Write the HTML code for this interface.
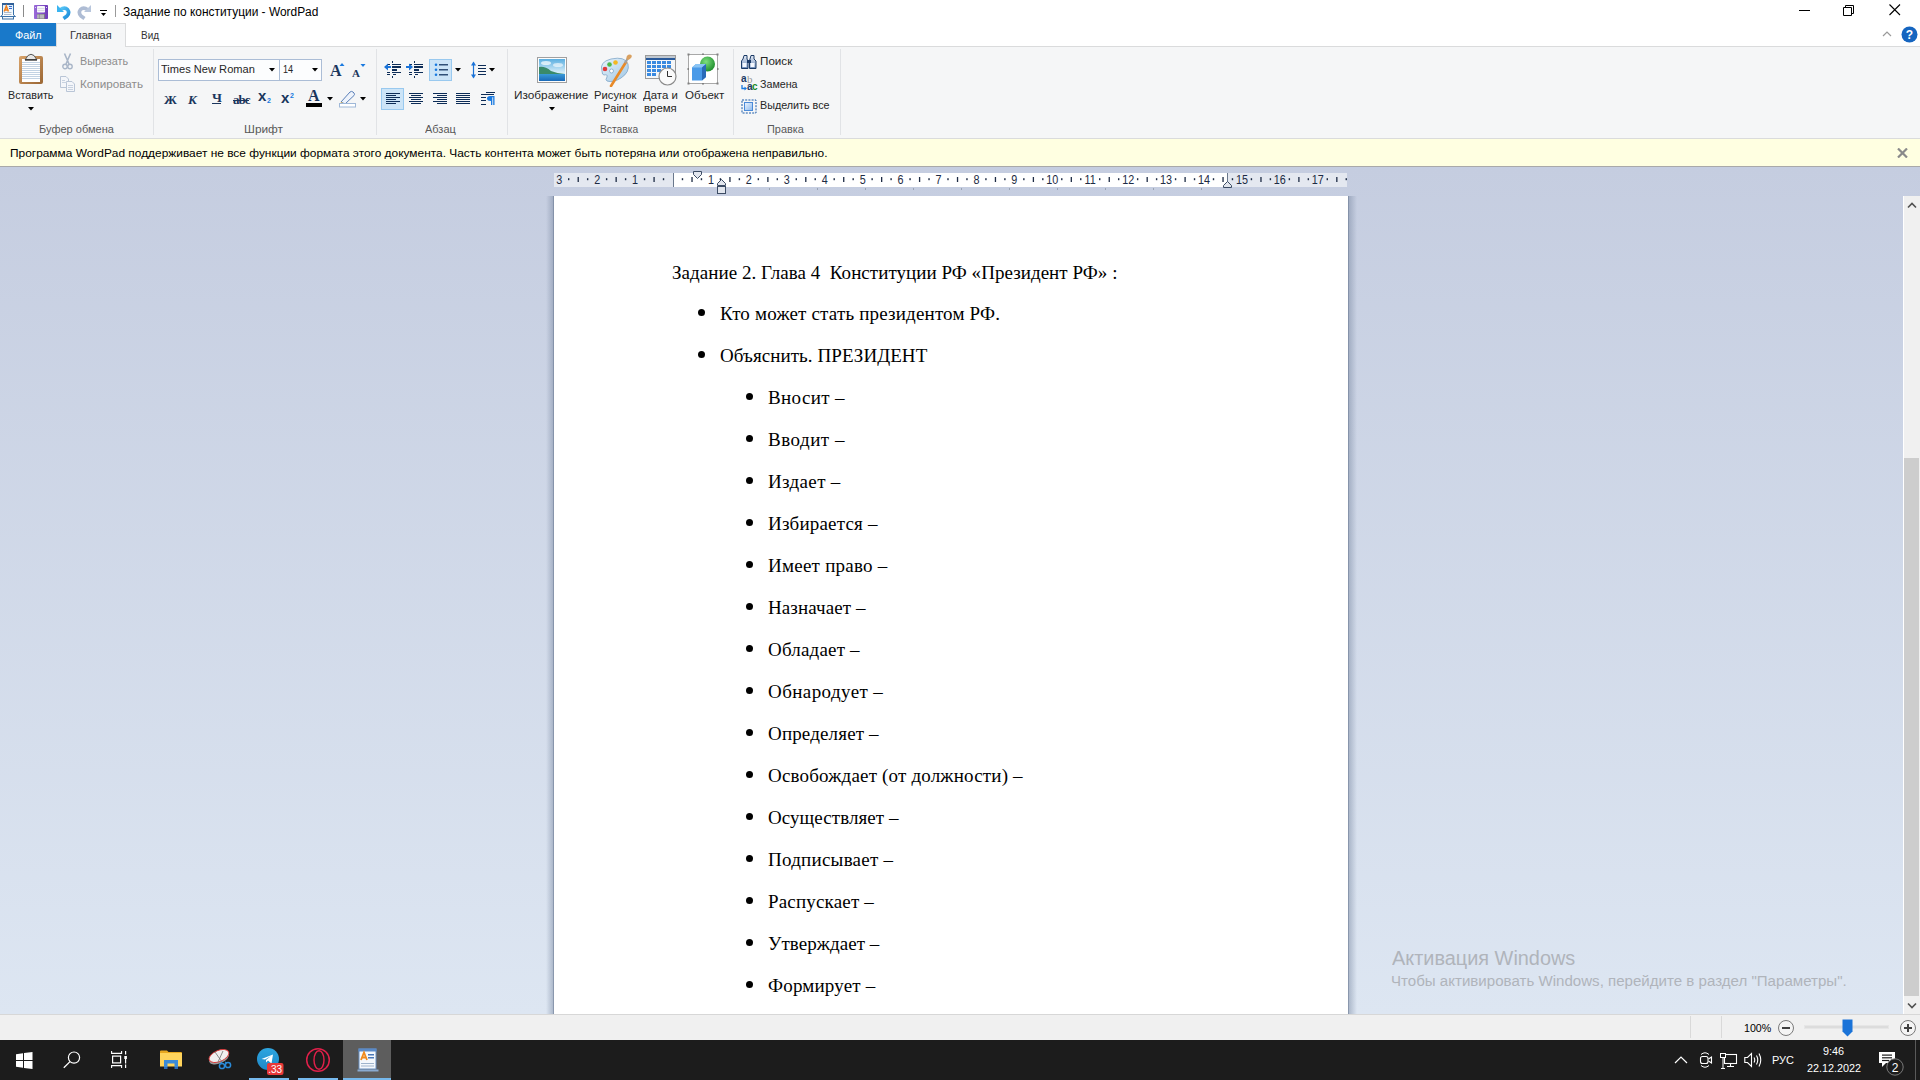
<!DOCTYPE html>
<html><head><meta charset="utf-8">
<style>
*{margin:0;padding:0;box-sizing:border-box}
html,body{width:1920px;height:1080px;overflow:hidden;background:#fff;font-family:"Liberation Sans",sans-serif;font-size:12px;color:#000}
.a{position:absolute}
.ui{font-family:"Liberation Sans",sans-serif;font-size:12px;white-space:nowrap;line-height:14px}
#title{left:0;top:0;width:1920px;height:23px;background:#fff}
#tabs{left:0;top:23px;width:1920px;height:23px;background:#fff}
#ribbon{left:0;top:46px;width:1920px;height:93px;background:#f5f6f7;border-top:1px solid #dadbdc;border-bottom:1px solid #dadbdc}
#notif{left:0;top:139px;width:1920px;height:28px;background:#ffffe1;border-bottom:1px solid #a9a9a9}
#docarea{left:0;top:167px;width:1920px;height:847px;background:linear-gradient(#c5cde0,#dde6f2)}
#page{left:554px;top:196px;width:794px;height:818px;background:#fff}
#vscroll{left:1903px;top:196px;width:17px;height:818px;background:#f0f0f0}
#status{left:0;top:1014px;width:1920px;height:26px;background:#f0f0f0;border-top:1px solid #d7d7d7}
#taskbar{left:0;top:1040px;width:1920px;height:40px;background:#1c1c1c}
.doc{font-family:"Liberation Serif",serif;font-size:19px;line-height:20px;white-space:pre;color:#000}
.lb{font-family:"Liberation Sans",sans-serif;white-space:pre;transform-origin:0 0}
.sep{top:49px;width:1px;height:86px;background:#e1e3e6}
.sf{font-family:"Liberation Serif",serif;font-weight:bold;color:#1b365d;white-space:pre}
.bul{width:7px;height:7px;border-radius:50%;background:#000}
</style></head><body>
<div id="title" class="a"></div>
<div id="tabs" class="a"></div>
<div id="ribbon" class="a"></div>
<div id="notif" class="a"></div>
<div id="docarea" class="a"></div>
<div id="page" class="a"></div>
<div id="vscroll" class="a"></div>
<div id="status" class="a"></div>
<div id="taskbar" class="a"></div>
<!--TITLE-->
<svg class="a" style="left:0;top:2px" width="17" height="19" viewBox="0 0 17 19">
 <defs><linearGradient id="wpp" x1="0" y1="0" x2="0" y2="1"><stop offset="0" stop-color="#d8ecfb"/><stop offset="1" stop-color="#ffffff"/></linearGradient></defs>
 <path d="M2.5 1.5 H13.5 V13 L15.5 14.5 H0.5 L2.5 13 Z" fill="url(#wpp)" stroke="#3a70a8" stroke-width="1"/>
 <rect x="2" y="1" width="12" height="2" fill="#2f5f98"/>
 <path d="M4.2 9.5 L6.3 4 L8.4 9.5 M5 8 H7.6" fill="none" stroke="#f07f1a" stroke-width="1.5"/>
 <rect x="9" y="4" width="3" height="1" fill="#3a6ad0"/><rect x="9" y="6" width="3" height="1" fill="#3a6ad0"/>
 <rect x="4" y="10" width="7.5" height="0.8" fill="#9aaac0"/><rect x="4" y="12" width="7.5" height="0.8" fill="#9aaac0"/>
 <rect x="2.5" y="14.5" width="11" height="2.5" fill="#f4f8fc" stroke="#3a70a8" stroke-width="1"/>
</svg>
<div class="a" style="left:23px;top:5px;width:1px;height:12px;background:#8a8a8a"></div>
<svg class="a" style="left:34px;top:5px" width="14" height="14" viewBox="0 0 14 14">
 <defs><linearGradient id="svp" x1="0" y1="0" x2="1" y2="0"><stop offset="0" stop-color="#9a6ad8"/><stop offset="1" stop-color="#6e3ab8"/></linearGradient></defs>
 <rect x="0" y="0" width="14" height="14" rx="0.8" fill="url(#svp)"/>
 <rect x="3" y="1" width="8" height="6.5" rx="0.8" fill="#f6f6fa"/>
 <rect x="3.5" y="3" width="7" height="0.6" fill="#c8ccd8"/><rect x="3.5" y="5" width="7" height="0.6" fill="#c8ccd8"/>
 <rect x="3" y="9" width="8" height="5" fill="#7a7a80"/><rect x="5.5" y="9.5" width="4.5" height="4" fill="#b8b8bc"/><rect x="3.5" y="9.5" width="1" height="4" fill="#e8e8ec"/>
 <rect x="1" y="2" width="1" height="1" fill="#e0d8f0"/><rect x="12" y="2" width="1" height="1" fill="#e0d8f0"/>
</svg>
<svg class="a" style="left:56px;top:4px" width="16" height="16" viewBox="0 0 16 16">
 <defs><linearGradient id="ug" x1="0" y1="0" x2="1" y2="1"><stop offset="0" stop-color="#5ac8f8"/><stop offset="1" stop-color="#1a8ad8"/></linearGradient></defs>
 <path d="M4 6 Q8.5 2.5 11.5 5.5 Q14 9 11 12 L7.5 14.5" fill="none" stroke="url(#ug)" stroke-width="3.6" stroke-linejoin="round"/>
 <path d="M1 1 L1 8 L8 8 Z" fill="#3ab4f0"/>
</svg>
<svg class="a" style="left:77px;top:4px" width="16" height="16" viewBox="0 0 16 16">
 <g transform="translate(15 0) scale(-1 1)">
 <path d="M4 6 Q8.5 2.5 11.5 5.5 Q14 9 11 12 L7.5 14.5" fill="none" stroke="#aebcd4" stroke-width="3.6" stroke-linejoin="round"/>
 <path d="M1 1 L1 8 L8 8 Z" fill="#b8c6dc"/>
 </g>
</svg>
<div class="a" style="left:100px;top:10px;width:7px;height:1px;background:#000"></div>
<svg class="a" style="left:100px;top:13px" width="7" height="4" viewBox="0 0 7 4"><path d="M1 0 H6 L3.5 3 Z" fill="#000"/></svg>
<div class="a" style="left:115px;top:5px;width:1px;height:12px;background:#9a9a9a"></div>
<!-- window controls -->
<div class="a" style="left:1799px;top:10px;width:11px;height:1px;background:#000"></div>
<svg class="a" style="left:1843px;top:4px" width="12" height="12" viewBox="0 0 12 12"><path d="M0.5 3.5 H8.5 V11.5 H0.5 Z M2.5 3.5 V1.5 H10.5 V9.5 H8.5" fill="none" stroke="#000"/></svg>
<svg class="a" style="left:1889px;top:4px" width="12" height="12" viewBox="0 0 12 12"><path d="M0.5 0.5 L11 11 M11 0.5 L0.5 11" stroke="#000" stroke-width="1.1"/></svg>
<!-- tabs -->
<div class="a" style="left:0;top:23px;width:56px;height:23px;background:#1979ca"></div>
<div class="a" style="left:56px;top:23px;width:70px;height:24px;background:#f5f6f7;border:1px solid #dadbdc;border-bottom:none"></div>
<svg class="a" style="left:1882px;top:30px" width="10" height="8" viewBox="0 0 10 8"><path d="M1 6 L5 2 L9 6" fill="none" stroke="#9a9a9a" stroke-width="1.2"/></svg>
<svg class="a" style="left:1901px;top:26px" width="17" height="17" viewBox="0 0 17 17"><circle cx="8.5" cy="8.5" r="8" fill="#1565c0"/><text x="8.5" y="13" font-family="Liberation Sans" font-weight="bold" font-size="12" fill="#fff" text-anchor="middle">?</text></svg>
<!--/TITLE-->
<!--RIB1-->
<div class="a sep" style="left:153px"></div>
<div class="a sep" style="left:376px"></div>
<div class="a sep" style="left:507px"></div>
<div class="a sep" style="left:733px"></div>
<div class="a sep" style="left:840px"></div>
<!-- paste -->
<svg class="a" style="left:18px;top:53px" width="27" height="33" viewBox="0 0 27 33">
 <defs><linearGradient id="brd" x1="0" y1="0" x2="1" y2="1"><stop offset="0" stop-color="#d9a36a"/><stop offset="1" stop-color="#9a6634"/></linearGradient></defs>
 <rect x="1" y="3" width="24" height="28" rx="2" fill="url(#brd)"/>
 <rect x="4" y="6" width="18" height="23" fill="#fff"/>
 <g fill="#c3d3e3"><rect x="4" y="9" width="18" height="1"/><rect x="4" y="11" width="18" height="1"/><rect x="4" y="13" width="18" height="1"/><rect x="4" y="15" width="18" height="1"/><rect x="4" y="17" width="18" height="1"/><rect x="4" y="19" width="18" height="1"/><rect x="4" y="21" width="18" height="1"/><rect x="4" y="23" width="18" height="1"/><rect x="4" y="25" width="18" height="1"/></g>
 <path d="M7 7 L10 2.5 Q13 0 16 2.5 L19 7 Z" fill="#e8e8e8" stroke="#5a5a5a" stroke-width="1"/>
 <rect x="7" y="6" width="12" height="1.5" fill="#404040"/>
</svg>
<svg class="a" style="left:28px;top:107px" width="6" height="4" viewBox="0 0 6 4"><path d="M0 0 H6 L3 3.5 Z" fill="#000"/></svg>
<!-- cut (disabled) -->
<svg class="a" style="left:62px;top:53px" width="11" height="17" viewBox="0 0 11 17">
 <path d="M2.5 0.5 L7 11 M8.5 0.5 L4 11" stroke="#a9b6c8" stroke-width="1.6" fill="none"/>
 <circle cx="3" cy="13.5" r="2.2" fill="none" stroke="#a9b6c8" stroke-width="1.4"/>
 <circle cx="8" cy="13.5" r="2.2" fill="none" stroke="#a9b6c8" stroke-width="1.4"/>
</svg>
<!-- copy (disabled) -->
<svg class="a" style="left:60px;top:76px" width="16" height="17" viewBox="0 0 16 17">
 <path d="M0.5 0.5 H6 L8.5 3 V11.5 H0.5 Z" fill="#f4f6fa" stroke="#b9c5d6"/>
 <path d="M6.5 5.5 H12 L14.5 8 V15.5 H6.5 Z" fill="#f4f6fa" stroke="#b9c5d6"/>
 <g fill="#c8d2e0"><rect x="8" y="9" width="5" height="1"/><rect x="8" y="11" width="5" height="1"/><rect x="8" y="13" width="5" height="1"/><rect x="2" y="4" width="3" height="1"/><rect x="2" y="6" width="5" height="1"/></g>
</svg>
<!-- font combos -->
<div class="a" style="left:158px;top:59px;width:122px;height:22px;background:#fcfdfe;border:1px solid #abbdd6"></div>
<div class="a" style="left:279px;top:59px;width:43px;height:22px;background:#fcfdfe;border:1px solid #abbdd6"></div>
<svg class="a" style="left:269px;top:68px" width="6" height="4" viewBox="0 0 6 4"><path d="M0 0 H6 L3 3.5 Z" fill="#000"/></svg>
<svg class="a" style="left:312px;top:68px" width="6" height="4" viewBox="0 0 6 4"><path d="M0 0 H6 L3 3.5 Z" fill="#000"/></svg>
<!-- grow / shrink -->
<div class="a sf" style="left:330px;top:62px;font-size:16px;line-height:18px">A</div>
<svg class="a" style="left:339px;top:63px" width="6" height="4" viewBox="0 0 6 4"><path d="M0.5 3 H5.5 L3 0 Z" fill="#1a7ae0"/></svg>
<div class="a sf" style="left:352px;top:67px;font-size:11px;line-height:12px">A</div>
<svg class="a" style="left:360px;top:64px" width="6" height="4" viewBox="0 0 6 4"><path d="M0.5 0 H5.5 L3 3 Z" fill="#1a7ae0"/></svg>
<!-- B I U S -->
<div class="a sf" style="left:164px;top:92px;font-size:13px;line-height:16px">Ж</div>
<div class="a sf" style="left:188px;top:92px;font-size:13px;line-height:16px;font-style:italic">К</div>
<div class="a sf" style="left:212px;top:90px;font-size:13.5px;line-height:16px">Ч</div>
<div class="a" style="left:212px;top:103px;width:9px;height:1px;background:#1b365d"></div>
<div class="a sf" style="left:233px;top:92px;font-size:13px;line-height:16px;letter-spacing:-1px">abc</div>
<div class="a" style="left:233px;top:100px;width:16px;height:1px;background:#1b365d"></div>
<!-- sub / sup -->
<div class="a sf" style="left:258px;top:88px;font-size:15px;line-height:16px;font-family:'Liberation Sans'">x</div>
<div class="a sf" style="left:267px;top:97px;font-size:7px;line-height:8px;font-family:'Liberation Sans';color:#1a7ae0">2</div>
<div class="a sf" style="left:281px;top:90px;font-size:15px;line-height:16px;font-family:'Liberation Sans'">x</div>
<div class="a sf" style="left:290px;top:92px;font-size:7px;line-height:8px;font-family:'Liberation Sans';color:#1a7ae0">2</div>
<!-- font color -->
<div class="a sf" style="left:308px;top:88px;font-size:16px;line-height:16px">A</div>
<div class="a" style="left:306px;top:103px;width:16px;height:4px;background:#000"></div>
<svg class="a" style="left:327px;top:97px" width="6" height="4" viewBox="0 0 6 4"><path d="M0 0 H6 L3 3.5 Z" fill="#000"/></svg>
<!-- highlight -->
<svg class="a" style="left:339px;top:90px" width="17" height="18" viewBox="0 0 17 18">
 <path d="M2 12 L11 2 Q12.5 0.8 14 2 L15 3 Q16 4.5 15 5.5 L6 14 Z" fill="#eef3fb" stroke="#5a7fb8" stroke-width="1"/>
 <path d="M2 12 L1 14 L4 14 L6 14 Z" fill="#e6b84a"/>
 <rect x="0.5" y="13.5" width="16" height="3.5" fill="#fff" stroke="#9fb8d8"/>
</svg>
<svg class="a" style="left:360px;top:97px" width="6" height="4" viewBox="0 0 6 4"><path d="M0 0 H6 L3 3.5 Z" fill="#000"/></svg>
<!--/RIB1-->
<!--RIB2-->
<!-- indent decrease -->
<svg class="a" style="left:384px;top:61px" width="18" height="17" viewBox="0 0 18 17" shape-rendering="crispEdges">
 <g fill="#0c2c57"><rect x="8" y="0" width="1" height="2"/><rect x="8" y="15" width="1" height="2"/><rect x="3" y="3" width="3" height="1"/><rect x="8" y="3" width="9" height="1"/><rect x="8" y="5" width="9" height="2"/><rect x="8" y="8" width="5" height="2"/><rect x="3" y="11" width="3" height="1"/><rect x="8" y="11" width="9" height="1"/><rect x="3" y="13" width="3" height="1"/><rect x="9" y="13" width="3" height="1"/></g>
 <path d="M0 6 L4 2.5 V5 H7 V7 H4 V9.5 Z" fill="#1a73d8" shape-rendering="auto"/>
</svg>
<!-- indent increase -->
<svg class="a" style="left:406px;top:61px" width="18" height="17" viewBox="0 0 18 17" shape-rendering="crispEdges">
 <g fill="#0c2c57"><rect x="8" y="0" width="1" height="2"/><rect x="8" y="15" width="1" height="2"/><rect x="3" y="3" width="3" height="1"/><rect x="8" y="3" width="9" height="1"/><rect x="8" y="5" width="9" height="2"/><rect x="8" y="8" width="5" height="2"/><rect x="3" y="11" width="3" height="1"/><rect x="8" y="11" width="9" height="1"/><rect x="3" y="13" width="3" height="1"/><rect x="9" y="13" width="3" height="1"/></g>
 <path d="M7 6 L3 2.5 V5 H0 V7 H3 V9.5 Z" fill="#1a73d8" shape-rendering="auto"/>
</svg>
<!-- bullets (selected) -->
<div class="a" style="left:429px;top:59px;width:23px;height:22px;background:#cce4f7;border:1px solid #99c9ef"></div>
<svg class="a" style="left:434px;top:63px" width="15" height="14" viewBox="0 0 15 14">
 <g fill="#1a7ae0"><circle cx="2" cy="1.8" r="1.3"/><circle cx="2" cy="6.8" r="1.3"/><circle cx="2" cy="11.8" r="1.3"/></g>
 <g fill="#0c2c57"><rect x="5" y="1.2" width="9" height="1.2"/><rect x="5" y="6.2" width="9" height="1.2"/><rect x="5" y="11.2" width="9" height="1.2"/></g>
</svg>
<svg class="a" style="left:455px;top:68px" width="6" height="4" viewBox="0 0 6 4"><path d="M0 0 H6 L3 3.5 Z" fill="#000"/></svg>
<!-- line spacing -->
<svg class="a" style="left:470px;top:61px" width="18" height="18" viewBox="0 0 18 18">
 <path d="M3.5 1.5 V16.5" stroke="#1a73d8" stroke-width="1.2"/>
 <path d="M1 4.5 L3.5 0.5 L6 4.5 Z M1 13.5 L3.5 17.5 L6 13.5 Z" fill="#1a73d8"/>
 <g fill="#0c2c57" shape-rendering="crispEdges"><rect x="8" y="4" width="8" height="1"/><rect x="8" y="7" width="8" height="1"/><rect x="8" y="10" width="8" height="1"/><rect x="8" y="13" width="8" height="1"/></g>
</svg>
<svg class="a" style="left:489px;top:68px" width="6" height="4" viewBox="0 0 6 4"><path d="M0 0 H6 L3 3.5 Z" fill="#000"/></svg>
<!-- align left (selected) -->
<div class="a" style="left:381px;top:88px;width:23px;height:22px;background:#cce4f7;border:1px solid #99c9ef"></div>
<svg class="a" style="left:386px;top:93px" width="15" height="12" viewBox="0 0 15 12">
 <g fill="#0c2c57"><rect x="0" y="0" width="14" height="1"/><rect x="0" y="2" width="10" height="1"/><rect x="0" y="4" width="14" height="1"/><rect x="0" y="6" width="10" height="1"/><rect x="0" y="8" width="14" height="1"/><rect x="0" y="10" width="10" height="1"/></g>
</svg>
<svg class="a" style="left:409px;top:93px" width="15" height="12" viewBox="0 0 15 12">
 <g fill="#0c2c57"><rect x="0" y="0" width="14" height="1"/><rect x="2" y="2" width="10" height="1"/><rect x="0" y="4" width="14" height="1"/><rect x="2" y="6" width="10" height="1"/><rect x="0" y="8" width="14" height="1"/><rect x="2" y="10" width="10" height="1"/></g>
</svg>
<svg class="a" style="left:433px;top:93px" width="15" height="12" viewBox="0 0 15 12">
 <g fill="#0c2c57"><rect x="0" y="0" width="14" height="1"/><rect x="4" y="2" width="10" height="1"/><rect x="0" y="4" width="14" height="1"/><rect x="4" y="6" width="10" height="1"/><rect x="0" y="8" width="14" height="1"/><rect x="4" y="10" width="10" height="1"/></g>
</svg>
<svg class="a" style="left:456px;top:93px" width="15" height="12" viewBox="0 0 15 12">
 <g fill="#0c2c57"><rect x="0" y="0" width="14" height="1"/><rect x="0" y="2" width="14" height="1"/><rect x="0" y="4" width="14" height="1"/><rect x="0" y="6" width="14" height="1"/><rect x="0" y="8" width="14" height="1"/><rect x="0" y="10" width="14" height="1"/></g>
</svg>
<svg class="a" style="left:481px;top:91px" width="15" height="15" viewBox="0 0 15 15">
 <g fill="#0c2c57" shape-rendering="crispEdges"><rect x="5" y="1" width="9" height="1"/><rect x="0" y="3" width="13" height="1"/><rect x="0" y="6" width="5" height="1"/><rect x="0" y="9" width="5" height="1"/><rect x="0" y="13" width="5" height="1"/></g>
 <path d="M9 5 H13.5 V14 H12.2 V6.2 H11.3 V14 H10 V10 Q6 10 6 7.5 Q6 5 9 5 Z" fill="#1a7ae0"/>
</svg>
<!-- insert: image -->
<svg class="a" style="left:537px;top:57px" width="30" height="26" viewBox="0 0 30 26">
 <defs>
  <linearGradient id="sky" x1="0" y1="0" x2="0" y2="1"><stop offset="0" stop-color="#5aaee0"/><stop offset="0.6" stop-color="#d4ecf8"/><stop offset="1" stop-color="#eef8fc"/></linearGradient>
  <linearGradient id="wat" x1="0" y1="0" x2="0" y2="1"><stop offset="0" stop-color="#3a9ad8"/><stop offset="1" stop-color="#1a6ab8"/></linearGradient>
 </defs>
 <rect x="0.5" y="0.5" width="29" height="25" fill="#fdfdfd" stroke="#a0a0a0"/>
 <rect x="2" y="2" width="26" height="22" fill="url(#sky)"/>
 <ellipse cx="9" cy="6" rx="5" ry="2" fill="#fff" opacity="0.7"/><ellipse cx="21" cy="8" rx="5" ry="2" fill="#fff" opacity="0.6"/><path d="M2 10 Q8 9 14 14 Q20 16.5 28 17 V24 H2 Z" fill="#3a8a6a"/>
 <path d="M2 17 H28 V24 H2 Z" fill="url(#wat)"/>
</svg>
<svg class="a" style="left:549px;top:107px" width="6" height="4" viewBox="0 0 6 4"><path d="M0 0 H6 L3 3.5 Z" fill="#000"/></svg>
<!-- paint -->
<svg class="a" style="left:599px;top:54px" width="34" height="33" viewBox="0 0 34 33">
 <defs><linearGradient id="pal" x1="0" y1="0" x2="1" y2="1"><stop offset="0" stop-color="#eaf4fb"/><stop offset="1" stop-color="#9ec6e4"/></linearGradient></defs>
 <path d="M3 17 Q0 8 12 5 Q26 2 29 10 Q31 18 22 24 Q14 29 8 27 Q6 26 8 23 Q9 20 5 21 Q3 21 3 17 Z" fill="url(#pal)" stroke="#7fa6c8" stroke-width="0.8"/>
 <circle cx="6" cy="15" r="2.3" fill="#e03a3a"/>
 <circle cx="10.5" cy="10.5" r="2.3" fill="#4cb84c"/>
 <circle cx="16.5" cy="8.5" r="2.3" fill="#f4b820"/>
 <circle cx="12.5" cy="17" r="2" fill="#fff" stroke="#7fa6c8" stroke-width="0.8"/>
 <path d="M12 32 L27 8" stroke="#e88a28" stroke-width="2.6" stroke-linecap="round"/>
 <path d="M26 9 L29 4" stroke="#a0a0a0" stroke-width="2.2"/>
 <path d="M27.5 5 Q27 0.5 31 0.5 Q34 1 32 4 Q30 6 28.5 6 Z" fill="#d9a060"/>
</svg>
<!-- date -->
<svg class="a" style="left:644px;top:54px" width="33" height="32" viewBox="0 0 33 32">
 <rect x="1.5" y="1.5" width="30" height="23" fill="#f4f6f8" stroke="#9a9a9a"/>
 <rect x="2" y="2" width="29" height="2" fill="#c0c8d0"/>
 <rect x="2" y="4" width="29" height="2" fill="#2a5a9a"/>
 <g fill="#3a8ae0">
  <rect x="3" y="7" width="4" height="3"/><rect x="8" y="7" width="4" height="3"/><rect x="13" y="7" width="4" height="3"/><rect x="18" y="7" width="4" height="3"/><rect x="23" y="7" width="4" height="3"/>
  <rect x="3" y="11" width="4" height="3"/><rect x="8" y="11" width="4" height="3"/><rect x="13" y="11" width="4" height="3"/><rect x="18" y="11" width="4" height="3"/><rect x="23" y="11" width="4" height="3"/>
  <rect x="3" y="15" width="4" height="3"/><rect x="8" y="15" width="4" height="3"/><rect x="13" y="15" width="4" height="3"/>
  <rect x="3" y="19" width="4" height="3"/><rect x="8" y="19" width="4" height="3"/>
 </g>
 <circle cx="23.5" cy="22.5" r="8.5" fill="#fafafa" stroke="#8a8a8a" stroke-width="1.2"/>
 <path d="M23.5 17 V22.5 H28" stroke="#303030" stroke-width="1" fill="none"/>
</svg>
<!-- object -->
<svg class="a" style="left:687px;top:53px" width="32" height="32" viewBox="0 0 32 32">
 <defs>
  <radialGradient id="sph" cx="0.4" cy="0.35" r="0.7"><stop offset="0" stop-color="#7ee07e"/><stop offset="1" stop-color="#1a8a2a"/></radialGradient>
 </defs>
 <rect x="1.5" y="1.5" width="29" height="29" fill="#fff" stroke="#a8a8a8" stroke-width="1"/>
 <g fill="#808080"><rect x="0.5" y="0.5" width="2" height="2"/><rect x="29.5" y="0.5" width="2" height="2"/><rect x="0.5" y="29.5" width="2" height="2"/><rect x="29.5" y="29.5" width="2" height="2"/><rect x="15" y="0.5" width="2" height="1.5"/><rect x="15" y="30" width="2" height="1.5"/><rect x="0.5" y="15" width="1.5" height="2"/><rect x="30" y="15" width="1.5" height="2"/></g>
 <circle cx="20.5" cy="11" r="7.5" fill="url(#sph)"/>
 <path d="M5 14.5 L9 11 H19 V24 L15 27.5 H5 Z" fill="#4a9ae8"/>
 <path d="M5 14.5 L9 11 H19 L15 14.5 Z" fill="#8ac4f4"/>
 <path d="M15 14.5 L19 11 V24 L15 27.5 Z" fill="#2a6ab8"/>
</svg>
<!--/RIB2-->
<!--RIB3-->
<!-- find -->
<svg class="a" style="left:741px;top:55px" width="16" height="14" viewBox="0 0 16 14">
 <defs><linearGradient id="bin" x1="0" y1="0" x2="0" y2="1"><stop offset="0" stop-color="#e8eef8"/><stop offset="1" stop-color="#6a8ab8"/></linearGradient></defs>
 <path d="M3 0.5 H6 V4 L7 6 V13.5 H0.5 V6 L2 4 Z" fill="url(#bin)" stroke="#1b3a66"/>
 <path d="M10 0.5 H13 V4 L15 6 V13.5 H8.5 V6 L9 4 Z" fill="url(#bin)" stroke="#1b3a66"/>
 <rect x="6" y="5" width="4" height="3" fill="#1b3a66"/>
 <rect x="1.5" y="8" width="4" height="4" fill="#f4f8ff"/><rect x="9.5" y="8" width="4" height="4" fill="#f4f8ff"/>
</svg>
<!-- replace -->
<div class="a" style="left:741px;top:74px;font-family:'Liberation Sans';font-weight:bold;font-size:10px;line-height:10px;color:#1b3a66">a</div>
<div class="a" style="left:747px;top:74px;font-family:'Liberation Serif';font-size:11px;line-height:10px;color:#9a9a9a">b</div>
<svg class="a" style="left:741px;top:85px" width="6" height="6" viewBox="0 0 6 6"><path d="M1 0 V3.5 H4" stroke="#1a7ae0" stroke-width="1.3" fill="none"/><path d="M3.5 1.5 L6 3.5 L3.5 5.5 Z" fill="#1a7ae0"/></svg>
<div class="a" style="left:747px;top:82px;font-family:'Liberation Sans';font-weight:bold;font-size:10px;line-height:10px;color:#1b3a66">a</div>
<div class="a" style="left:752px;top:82px;font-family:'Liberation Sans';font-weight:bold;font-size:10px;line-height:10px;color:#1a8a2a">c</div>
<!-- select all -->
<svg class="a" style="left:741px;top:99px" width="16" height="15" viewBox="0 0 16 15">
 <defs><linearGradient id="sel" x1="0" y1="0" x2="1" y2="1"><stop offset="0" stop-color="#f0f6ff"/><stop offset="1" stop-color="#8ab8ec"/></linearGradient></defs>
 <rect x="1" y="1" width="14" height="13" fill="none" stroke="#1a5aa8" stroke-dasharray="2 1.2"/>
 <rect x="3.5" y="3.5" width="8" height="8" fill="url(#sel)" stroke="#4a8ad8"/>
</svg>
<!-- notification close -->
<svg class="a" style="left:1897px;top:148px" width="11" height="10" viewBox="0 0 11 10"><path d="M1 0.5 L10 9.5 M10 0.5 L1 9.5" stroke="#8a8a8a" stroke-width="2.2"/></svg>
<!--/RIB3-->
<!--LOWER-->
<!-- page shadows -->
<div class="a" style="left:546px;top:196px;width:8px;height:818px;background:linear-gradient(90deg,rgba(120,135,160,0),rgba(120,135,160,0.45) 85%,rgba(110,125,150,0.75) 86%,rgba(110,125,150,0.75))"></div>
<div class="a" style="left:1348px;top:196px;width:9px;height:818px;background:linear-gradient(270deg,rgba(120,135,160,0),rgba(120,135,160,0.45) 85%,rgba(110,125,150,0.75) 86%,rgba(110,125,150,0.75))"></div>
<!-- scrollbar -->
<div class="a" style="left:1903px;top:196px;width:1px;height:818px;background:#fff"></div>
<div class="a" style="left:1904px;top:458px;width:15px;height:538px;background:#cdcdcd"></div>
<svg class="a" style="left:1907px;top:201px" width="10" height="8" viewBox="0 0 10 8"><path d="M1 6.5 L5 2.5 L9 6.5" fill="none" stroke="#505050" stroke-width="1.6"/></svg>
<svg class="a" style="left:1907px;top:1002px" width="10" height="8" viewBox="0 0 10 8"><path d="M1 1.5 L5 5.5 L9 1.5" fill="none" stroke="#505050" stroke-width="1.6"/></svg>
<!-- watermark -->
<!-- status bar -->
<div class="a" style="left:1690px;top:1016px;width:1px;height:22px;background:#d9d9d9"></div>
<div class="a" style="left:1721px;top:1016px;width:1px;height:22px;background:#d9d9d9"></div>
<svg class="a" style="left:1777px;top:1019px" width="18" height="18" viewBox="0 0 18 18"><circle cx="9" cy="9" r="7.5" fill="#f4f4f4" stroke="#7a7a7a" stroke-width="1"/><rect x="5" y="8" width="8" height="2" fill="#404040"/></svg>
<div class="a" style="left:1804px;top:1025px;width:85px;height:4px;background:#dcdcdc;border:1px solid #e6e6e6"></div>
<svg class="a" style="left:1842px;top:1019px" width="11" height="18" viewBox="0 0 11 18"><path d="M0.5 0.5 H10.5 V12.5 L5.5 17.5 L0.5 12.5 Z" fill="#1a73d8"/></svg>
<svg class="a" style="left:1899px;top:1019px" width="18" height="18" viewBox="0 0 18 18"><circle cx="9" cy="9" r="7.5" fill="#f4f4f4" stroke="#7a7a7a" stroke-width="1"/><rect x="5" y="8" width="8" height="2" fill="#404040"/><rect x="8" y="5" width="2" height="8" fill="#404040"/></svg>
<!--/LOWER-->
<!--TASK-->
<!-- start -->
<svg class="a" style="left:16px;top:1052px" width="17" height="17" viewBox="0 0 17 17"><path d="M0 2.3 L7 1.3 V8 H0 Z M8 1.1 L16.5 0 V8 H8 Z M0 9 H7 V15.7 L0 14.7 Z M8 9 H16.5 V17 L8 15.9 Z" fill="#fff"/></svg>
<!-- search -->
<svg class="a" style="left:63px;top:1051px" width="18" height="18" viewBox="0 0 18 18"><circle cx="11" cy="6.6" r="5.6" fill="none" stroke="#fff" stroke-width="1.2"/><path d="M7 10.6 L0.8 16.8" stroke="#fff" stroke-width="1.3"/></svg>
<!-- task view -->
<svg class="a" style="left:111px;top:1051px" width="18" height="18" viewBox="0 0 18 18"><path d="M0.6 0 V2.4 H10.6 V0 M0.6 17 V14.6 H10.6 V17" fill="none" stroke="#fff" stroke-width="1.1"/><rect x="1.6" y="5.1" width="8" height="6.8" fill="none" stroke="#fff" stroke-width="1.2"/><rect x="14" y="0" width="1.2" height="3.5" fill="#fff"/><rect x="14" y="13.5" width="1.2" height="3.5" fill="#fff"/><rect x="13.3" y="5" width="2.6" height="3" fill="#fff"/><rect x="14" y="8" width="1.2" height="4.5" fill="#fff"/></svg>
<!-- explorer -->
<svg class="a" style="left:160px;top:1050px" width="22" height="20" viewBox="0 0 22 20">
 <path d="M0 1.5 Q0 0.5 1 0.5 H7 L8.5 2 H21 Q22 2 22 3 V16 H0 Z" fill="#e8a820"/>
 <rect x="0" y="3" width="22" height="13.5" fill="#ffd45c"/>
 <path d="M4 10 H18 V17 H14.5 V13.5 H7.5 V17 H4 Z" fill="#3a8ad8"/>
 <rect x="4" y="17" width="3.5" height="2" fill="#2a6ab8"/><rect x="14.5" y="17" width="3.5" height="2" fill="#2a6ab8"/>
</svg>
<!-- snipping -->
<svg class="a" style="left:207px;top:1048px" width="26" height="24" viewBox="0 0 26 24">
 <ellipse cx="12" cy="10" rx="10.5" ry="5.5" transform="rotate(-22 12 10)" fill="#9a9a9a"/>
 <ellipse cx="12" cy="8" rx="10.5" ry="5.5" transform="rotate(-22 12 8)" fill="#f0f0f0" stroke="#d83838" stroke-width="0.9"/>
 <path d="M8 4 L15 14 M16 3 L11 14" stroke="#707070" stroke-width="0.8"/>
 <circle cx="15" cy="18" r="2.6" fill="none" stroke="#2a8ad8" stroke-width="1.5"/>
 <circle cx="21" cy="17" r="2.6" fill="none" stroke="#2a8ad8" stroke-width="1.5"/>
 <path d="M14 14 L15 16 M18 14 L20 15" stroke="#2a8ad8" stroke-width="1.2"/>
</svg>
<!-- telegram -->
<div class="a" style="left:249px;top:1078px;width:40px;height:2px;background:#76b9ed"></div>
<svg class="a" style="left:257px;top:1048px" width="28" height="28" viewBox="0 0 28 28">
 <defs><linearGradient id="tg" x1="0" y1="0" x2="0" y2="1"><stop offset="0" stop-color="#2ea6e0"/><stop offset="1" stop-color="#1e88c8"/></linearGradient></defs>
 <circle cx="11" cy="11" r="11" fill="url(#tg)"/>
 <path d="M4.5 11 L16 6.5 L14.5 15.5 L11 12.5 L9 14.5 V12 L14 8 L8 11.5 Z" fill="#fff"/>
 <rect x="10" y="15" width="16.5" height="12" rx="2" fill="#e83838"/>
 <text x="18.2" y="25" font-family="Liberation Sans" font-size="10" fill="#fff" text-anchor="middle">.33</text>
</svg>
<!-- opera -->
<div class="a" style="left:298px;top:1078px;width:40px;height:2px;background:#76b9ed"></div>
<svg class="a" style="left:305px;top:1047px" width="26" height="26" viewBox="0 0 26 26">
 <circle cx="13" cy="13" r="11.3" fill="none" stroke="#e0204a" stroke-width="1.5"/>
 <ellipse cx="14" cy="13" rx="5" ry="9.3" fill="none" stroke="#e0204a" stroke-width="1.4"/>
</svg>
<!-- wordpad active -->
<div class="a" style="left:343px;top:1040px;width:48px;height:40px;background:#5d5d5d"></div>
<div class="a" style="left:343px;top:1078px;width:48px;height:2px;background:#76b9ed"></div>
<svg class="a" style="left:357px;top:1048px" width="22" height="24" viewBox="0 0 22 24">
 <rect x="2" y="1" width="17" height="20" fill="#f4f8fc" stroke="#6a90c0"/>
 <rect x="1.5" y="0.5" width="18" height="3" fill="#5a8ac8"/>
 <path d="M4 12 L7 4.5 L10 12 M5 9.5 H9" fill="none" stroke="#f08a1c" stroke-width="1.8"/>
 <rect x="11" y="6" width="6" height="1.5" fill="#4a78b8"/><rect x="11" y="9" width="6" height="1.5" fill="#4a78b8"/>
 <rect x="4" y="15" width="13" height="1" fill="#9fb4cc"/><rect x="4" y="17.5" width="13" height="1" fill="#9fb4cc"/>
 <path d="M0.5 22.5 H21.5" stroke="#8aaad0" stroke-width="2"/>
</svg>
<!-- tray -->
<svg class="a" style="left:1674px;top:1055px" width="14" height="9" viewBox="0 0 14 9"><path d="M1 8 L7 2 L13 8" fill="none" stroke="#fff" stroke-width="1.2"/></svg>
<svg class="a" style="left:1699px;top:1051px" width="14" height="18" viewBox="0 0 14 18">
 <path d="M2 3.5 Q6 0 10 3.5 M2 14.5 Q6 18 10 14.5" fill="none" stroke="#fff" stroke-width="1"/>
 <rect x="1.5" y="5.5" width="7.5" height="7" rx="2" fill="none" stroke="#fff" stroke-width="1.1"/>
 <path d="M9.5 8 L12.5 6 V12 L9.5 10" fill="none" stroke="#fff" stroke-width="1.1"/>
</svg>
<svg class="a" style="left:1720px;top:1053px" width="18" height="16" viewBox="0 0 18 16">
 <rect x="4.5" y="1.5" width="12" height="9" fill="none" stroke="#fff" stroke-width="1.1"/>
 <path d="M10.5 10.5 V13.5 M7 13.5 H14" stroke="#fff" stroke-width="1.1"/>
 <rect x="0.5" y="0.5" width="5" height="4" fill="#1c1c1c" stroke="#fff" stroke-width="1"/>
 <path d="M3 4.5 V15.5 M1 15.5 H5" stroke="#fff" stroke-width="1"/>
</svg>
<svg class="a" style="left:1744px;top:1052px" width="18" height="16" viewBox="0 0 18 16">
 <path d="M0.8 5.5 H3.5 L7.5 1.5 V14.5 L3.5 10.5 H0.8 Z" fill="none" stroke="#fff" stroke-width="1.1"/>
 <path d="M10 5.5 Q11.5 8 10 10.5 M12.5 3.5 Q15 8 12.5 12.5 M15 1.5 Q18.5 8 15 14.5" fill="none" stroke="#fff" stroke-width="1.1"/>
</svg>
<svg class="a" style="left:1878px;top:1050px" width="28" height="28" viewBox="0 0 28 28">
 <path d="M1 2 H17 V13 H8 L4 17 V13 H1 Z" fill="#fff"/>
 <g fill="#1c1c1c"><rect x="4" y="4.5" width="10" height="1.2"/><rect x="4" y="7.2" width="10" height="1.2"/><rect x="4" y="9.9" width="7" height="1.2"/></g>
 <circle cx="17" cy="17" r="8.2" fill="#1c1c1c" stroke="#7a7a7a" stroke-width="1"/>
 <text x="17" y="21.5" font-family="Liberation Sans" font-size="12" fill="#fff" text-anchor="middle">2</text>
</svg>
<div class="a" style="left:1915px;top:1040px;width:1px;height:40px;background:#5a5a5a"></div>
<!--/TASK-->
<!--RULER-->
<div class="a" style="left:554px;top:173px;width:793px;height:14px;background:#e4e8f0"></div>
<div class="a" style="left:674px;top:173px;width:553px;height:14px;background:#fff"></div>
<div class="a" style="left:673px;top:173px;width:1px;height:14px;background:#6a788c"></div>
<div class="a" style="left:1227px;top:173px;width:1px;height:9px;background:#6a788c"></div>
<svg class="a" style="left:554px;top:168px" width="794" height="28" viewBox="554 168 794 28">
<text x="559.21" y="184" font-family="Liberation Sans" font-size="12" fill="#1d2b44" text-anchor="middle" transform="translate(559.21 0) scale(0.9 1) translate(-559.21 0)">3</text>
<rect x="567.99" y="178.2" width="1.4" height="2" fill="#1d2b44"/>
<rect x="577.57" y="177" width="1.3" height="5" fill="#1d2b44"/>
<rect x="586.96" y="178.2" width="1.4" height="2" fill="#1d2b44"/>
<text x="597.14" y="184" font-family="Liberation Sans" font-size="12" fill="#1d2b44" text-anchor="middle" transform="translate(597.14 0) scale(0.9 1) translate(-597.14 0)">2</text>
<rect x="605.92" y="178.2" width="1.4" height="2" fill="#1d2b44"/>
<rect x="615.50" y="177" width="1.3" height="5" fill="#1d2b44"/>
<rect x="624.89" y="178.2" width="1.4" height="2" fill="#1d2b44"/>
<text x="635.07" y="184" font-family="Liberation Sans" font-size="12" fill="#1d2b44" text-anchor="middle" transform="translate(635.07 0) scale(0.9 1) translate(-635.07 0)">1</text>
<rect x="643.85" y="178.2" width="1.4" height="2" fill="#1d2b44"/>
<rect x="653.43" y="177" width="1.3" height="5" fill="#1d2b44"/>
<rect x="662.82" y="178.2" width="1.4" height="2" fill="#1d2b44"/>
<rect x="681.78" y="178.2" width="1.4" height="2" fill="#1d2b44"/>
<rect x="691.37" y="177" width="1.3" height="5" fill="#1d2b44"/>
<rect x="700.75" y="178.2" width="1.4" height="2" fill="#1d2b44"/>
<text x="710.93" y="184" font-family="Liberation Sans" font-size="12" fill="#1d2b44" text-anchor="middle" transform="translate(710.93 0) scale(0.9 1) translate(-710.93 0)">1</text>
<rect x="719.71" y="178.2" width="1.4" height="2" fill="#1d2b44"/>
<rect x="729.29" y="177" width="1.3" height="5" fill="#1d2b44"/>
<rect x="738.68" y="178.2" width="1.4" height="2" fill="#1d2b44"/>
<text x="748.86" y="184" font-family="Liberation Sans" font-size="12" fill="#1d2b44" text-anchor="middle" transform="translate(748.86 0) scale(0.9 1) translate(-748.86 0)">2</text>
<rect x="757.64" y="178.2" width="1.4" height="2" fill="#1d2b44"/>
<rect x="767.23" y="177" width="1.3" height="5" fill="#1d2b44"/>
<rect x="776.61" y="178.2" width="1.4" height="2" fill="#1d2b44"/>
<text x="786.79" y="184" font-family="Liberation Sans" font-size="12" fill="#1d2b44" text-anchor="middle" transform="translate(786.79 0) scale(0.9 1) translate(-786.79 0)">3</text>
<rect x="795.57" y="178.2" width="1.4" height="2" fill="#1d2b44"/>
<rect x="805.15" y="177" width="1.3" height="5" fill="#1d2b44"/>
<rect x="814.54" y="178.2" width="1.4" height="2" fill="#1d2b44"/>
<text x="824.72" y="184" font-family="Liberation Sans" font-size="12" fill="#1d2b44" text-anchor="middle" transform="translate(824.72 0) scale(0.9 1) translate(-824.72 0)">4</text>
<rect x="833.50" y="178.2" width="1.4" height="2" fill="#1d2b44"/>
<rect x="843.08" y="177" width="1.3" height="5" fill="#1d2b44"/>
<rect x="852.47" y="178.2" width="1.4" height="2" fill="#1d2b44"/>
<text x="862.65" y="184" font-family="Liberation Sans" font-size="12" fill="#1d2b44" text-anchor="middle" transform="translate(862.65 0) scale(0.9 1) translate(-862.65 0)">5</text>
<rect x="871.43" y="178.2" width="1.4" height="2" fill="#1d2b44"/>
<rect x="881.01" y="177" width="1.3" height="5" fill="#1d2b44"/>
<rect x="890.40" y="178.2" width="1.4" height="2" fill="#1d2b44"/>
<text x="900.58" y="184" font-family="Liberation Sans" font-size="12" fill="#1d2b44" text-anchor="middle" transform="translate(900.58 0) scale(0.9 1) translate(-900.58 0)">6</text>
<rect x="909.36" y="178.2" width="1.4" height="2" fill="#1d2b44"/>
<rect x="918.94" y="177" width="1.3" height="5" fill="#1d2b44"/>
<rect x="928.33" y="178.2" width="1.4" height="2" fill="#1d2b44"/>
<text x="938.51" y="184" font-family="Liberation Sans" font-size="12" fill="#1d2b44" text-anchor="middle" transform="translate(938.51 0) scale(0.9 1) translate(-938.51 0)">7</text>
<rect x="947.29" y="178.2" width="1.4" height="2" fill="#1d2b44"/>
<rect x="956.88" y="177" width="1.3" height="5" fill="#1d2b44"/>
<rect x="966.26" y="178.2" width="1.4" height="2" fill="#1d2b44"/>
<text x="976.44" y="184" font-family="Liberation Sans" font-size="12" fill="#1d2b44" text-anchor="middle" transform="translate(976.44 0) scale(0.9 1) translate(-976.44 0)">8</text>
<rect x="985.22" y="178.2" width="1.4" height="2" fill="#1d2b44"/>
<rect x="994.80" y="177" width="1.3" height="5" fill="#1d2b44"/>
<rect x="1004.19" y="178.2" width="1.4" height="2" fill="#1d2b44"/>
<text x="1014.37" y="184" font-family="Liberation Sans" font-size="12" fill="#1d2b44" text-anchor="middle" transform="translate(1014.37 0) scale(0.9 1) translate(-1014.37 0)">9</text>
<rect x="1023.15" y="178.2" width="1.4" height="2" fill="#1d2b44"/>
<rect x="1032.74" y="177" width="1.3" height="5" fill="#1d2b44"/>
<rect x="1042.12" y="178.2" width="1.4" height="2" fill="#1d2b44"/>
<text x="1052.30" y="184" font-family="Liberation Sans" font-size="12" fill="#1d2b44" text-anchor="middle" transform="translate(1052.30 0) scale(0.9 1) translate(-1052.30 0)">10</text>
<rect x="1061.08" y="178.2" width="1.4" height="2" fill="#1d2b44"/>
<rect x="1070.66" y="177" width="1.3" height="5" fill="#1d2b44"/>
<rect x="1080.05" y="178.2" width="1.4" height="2" fill="#1d2b44"/>
<text x="1090.23" y="184" font-family="Liberation Sans" font-size="12" fill="#1d2b44" text-anchor="middle" transform="translate(1090.23 0) scale(0.9 1) translate(-1090.23 0)">11</text>
<rect x="1099.01" y="178.2" width="1.4" height="2" fill="#1d2b44"/>
<rect x="1108.60" y="177" width="1.3" height="5" fill="#1d2b44"/>
<rect x="1117.98" y="178.2" width="1.4" height="2" fill="#1d2b44"/>
<text x="1128.16" y="184" font-family="Liberation Sans" font-size="12" fill="#1d2b44" text-anchor="middle" transform="translate(1128.16 0) scale(0.9 1) translate(-1128.16 0)">12</text>
<rect x="1136.94" y="178.2" width="1.4" height="2" fill="#1d2b44"/>
<rect x="1146.53" y="177" width="1.3" height="5" fill="#1d2b44"/>
<rect x="1155.91" y="178.2" width="1.4" height="2" fill="#1d2b44"/>
<text x="1166.09" y="184" font-family="Liberation Sans" font-size="12" fill="#1d2b44" text-anchor="middle" transform="translate(1166.09 0) scale(0.9 1) translate(-1166.09 0)">13</text>
<rect x="1174.87" y="178.2" width="1.4" height="2" fill="#1d2b44"/>
<rect x="1184.45" y="177" width="1.3" height="5" fill="#1d2b44"/>
<rect x="1193.84" y="178.2" width="1.4" height="2" fill="#1d2b44"/>
<text x="1204.02" y="184" font-family="Liberation Sans" font-size="12" fill="#1d2b44" text-anchor="middle" transform="translate(1204.02 0) scale(0.9 1) translate(-1204.02 0)">14</text>
<rect x="1212.80" y="178.2" width="1.4" height="2" fill="#1d2b44"/>
<rect x="1222.39" y="177" width="1.3" height="5" fill="#1d2b44"/>
<rect x="1231.77" y="178.2" width="1.4" height="2" fill="#1d2b44"/>
<text x="1241.95" y="184" font-family="Liberation Sans" font-size="12" fill="#1d2b44" text-anchor="middle" transform="translate(1241.95 0) scale(0.9 1) translate(-1241.95 0)">15</text>
<rect x="1250.73" y="178.2" width="1.4" height="2" fill="#1d2b44"/>
<rect x="1260.32" y="177" width="1.3" height="5" fill="#1d2b44"/>
<rect x="1269.70" y="178.2" width="1.4" height="2" fill="#1d2b44"/>
<text x="1279.88" y="184" font-family="Liberation Sans" font-size="12" fill="#1d2b44" text-anchor="middle" transform="translate(1279.88 0) scale(0.9 1) translate(-1279.88 0)">16</text>
<rect x="1288.66" y="178.2" width="1.4" height="2" fill="#1d2b44"/>
<rect x="1298.25" y="177" width="1.3" height="5" fill="#1d2b44"/>
<rect x="1307.63" y="178.2" width="1.4" height="2" fill="#1d2b44"/>
<text x="1317.81" y="184" font-family="Liberation Sans" font-size="12" fill="#1d2b44" text-anchor="middle" transform="translate(1317.81 0) scale(0.9 1) translate(-1317.81 0)">17</text>
<rect x="1326.59" y="178.2" width="1.4" height="2" fill="#1d2b44"/>
<rect x="1336.18" y="177" width="1.3" height="5" fill="#1d2b44"/>
<rect x="1345.56" y="178.2" width="1.4" height="2" fill="#1d2b44"/>
<rect x="769.0" y="188" width="1" height="2" fill="#9aa4b4"/>
<rect x="817.0" y="188" width="1" height="2" fill="#9aa4b4"/>
<rect x="865.0" y="188" width="1" height="2" fill="#9aa4b4"/>
<rect x="913.0" y="188" width="1" height="2" fill="#9aa4b4"/>
<rect x="961.0" y="188" width="1" height="2" fill="#9aa4b4"/>
<rect x="1009.0" y="188" width="1" height="2" fill="#9aa4b4"/>
<rect x="1057.0" y="188" width="1" height="2" fill="#9aa4b4"/>
<rect x="1105.0" y="188" width="1" height="2" fill="#9aa4b4"/>
<rect x="1153.0" y="188" width="1" height="2" fill="#9aa4b4"/>
<rect x="1201.0" y="188" width="1" height="2" fill="#9aa4b4"/>
<path d="M693.5 171.5 H701.5 V174.5 L697.5 178.5 L693.5 174.5 Z" fill="#e2e6ee" stroke="#3c4c64" stroke-width="1"/>
<path d="M717.5 185.5 V183.5 L721.5 179.5 L725.5 183.5 V185.5 Z" fill="#e2e6ee" stroke="#3c4c64" stroke-width="1"/>
<rect x="717.5" y="186.5" width="8" height="7" fill="#e2e6ee" stroke="#3c4c64" stroke-width="1"/>
<path d="M1223.5 187.5 V185.5 L1227.5 181.5 L1231.5 185.5 V187.5 Z" fill="#e2e6ee" stroke="#3c4c64" stroke-width="1"/>
</svg>
<!--/RULER-->
<!--DOC-->
<div class="a doc" style="left:672px;top:263px;letter-spacing:0.044px">Задание 2. Глава 4  Конституции РФ «Президент РФ» :</div>
<div class="a doc" style="left:720px;top:304px;letter-spacing:0.18px">Кто может стать президентом РФ.</div>
<div class="a bul" style="left:698px;top:309px"></div>
<div class="a doc" style="left:720px;top:346px;letter-spacing:0.068px">Объяснить. ПРЕЗИДЕНТ</div>
<div class="a bul" style="left:698px;top:351px"></div>
<div class="a doc" style="left:768px;top:388px;letter-spacing:0.371px">Вносит –</div>
<div class="a bul" style="left:746px;top:393px"></div>
<div class="a doc" style="left:768px;top:430px;letter-spacing:0.514px">Вводит –</div>
<div class="a bul" style="left:746px;top:435px"></div>
<div class="a doc" style="left:768px;top:472px;letter-spacing:0.343px">Издает –</div>
<div class="a bul" style="left:746px;top:477px"></div>
<div class="a doc" style="left:768px;top:514px;letter-spacing:0.182px">Избирается –</div>
<div class="a bul" style="left:746px;top:519px"></div>
<div class="a doc" style="left:768px;top:556px;letter-spacing:0.25px">Имеет право –</div>
<div class="a bul" style="left:746px;top:561px"></div>
<div class="a doc" style="left:768px;top:598px;letter-spacing:0.1px">Назначает –</div>
<div class="a bul" style="left:746px;top:603px"></div>
<div class="a doc" style="left:768px;top:640px;letter-spacing:0.189px">Обладает –</div>
<div class="a bul" style="left:746px;top:645px"></div>
<div class="a doc" style="left:768px;top:682px;letter-spacing:0.409px">Обнародует –</div>
<div class="a bul" style="left:746px;top:687px"></div>
<div class="a doc" style="left:768px;top:724px;letter-spacing:0.155px">Определяет –</div>
<div class="a bul" style="left:746px;top:729px"></div>
<div class="a doc" style="left:768px;top:766px;letter-spacing:0.181px">Освобождает (от должности) –</div>
<div class="a bul" style="left:746px;top:771px"></div>
<div class="a doc" style="left:768px;top:808px;letter-spacing:0.069px">Осуществляет –</div>
<div class="a bul" style="left:746px;top:813px"></div>
<div class="a doc" style="left:768px;top:850px;letter-spacing:0.25px">Подписывает –</div>
<div class="a bul" style="left:746px;top:855px"></div>
<div class="a doc" style="left:768px;top:892px;letter-spacing:0.173px">Распускает –</div>
<div class="a bul" style="left:746px;top:897px"></div>
<div class="a doc" style="left:768px;top:934px;letter-spacing:0.055px">Утверждает –</div>
<div class="a bul" style="left:746px;top:939px"></div>
<div class="a doc" style="left:768px;top:976px;letter-spacing:0.19px">Формирует –</div>
<div class="a bul" style="left:746px;top:981px"></div>
<!--/DOC-->
<!--LBL-->
<div class="a lb" style="left:122.90px;top:4.64px;font-size:12px;line-height:14px;color:#000;transform:scaleX(0.9932)">Задание по конституции - WordPad</div>
<div class="a lb" style="left:14.60px;top:28.89px;font-size:11px;line-height:13px;color:#fff;transform:scaleX(0.9878)">Файл</div>
<div class="a lb" style="left:70.10px;top:28.89px;font-size:11px;line-height:13px;color:#333;transform:scaleX(0.9926)">Главная</div>
<div class="a lb" style="left:141.30px;top:28.89px;font-size:11px;line-height:13px;color:#333;transform:scaleX(0.9033)">Вид</div>
<div class="a lb" style="left:8.30px;top:89.49px;font-size:11px;line-height:13px;color:#262626;transform:scaleX(0.9745)">Вставить</div>
<div class="a lb" style="left:79.60px;top:55.49px;font-size:11px;line-height:13px;color:#8d8d8d;transform:scaleX(0.9818)">Вырезать</div>
<div class="a lb" style="left:79.60px;top:77.59px;font-size:11px;line-height:13px;color:#8d8d8d;transform:scaleX(1.0639)">Копировать</div>
<div class="a lb" style="left:38.50px;top:122.59px;font-size:11px;line-height:13px;color:#595959;transform:scaleX(1.0023)">Буфер обмена</div>
<div class="a lb" style="left:160.75px;top:63.39px;font-size:11px;line-height:13px;color:#262626;transform:scaleX(1.0081)">Times New Roman</div>
<div class="a lb" style="left:283.00px;top:63.39px;font-size:11px;line-height:13px;color:#262626;transform:scaleX(0.8252)">14</div>
<div class="a lb" style="left:244.00px;top:122.59px;font-size:11px;line-height:13px;color:#595959;transform:scaleX(1.0788)">Шрифт</div>
<div class="a lb" style="left:425.30px;top:122.59px;font-size:11px;line-height:13px;color:#595959;transform:scaleX(0.9982)">Абзац</div>
<div class="a lb" style="left:514.40px;top:89.39px;font-size:11px;line-height:13px;color:#262626;transform:scaleX(1.0741)">Изображение</div>
<div class="a lb" style="left:594.40px;top:89.39px;font-size:11px;line-height:13px;color:#262626;transform:scaleX(1.0222)">Рисунок</div>
<div class="a lb" style="left:602.80px;top:102.19px;font-size:11px;line-height:13px;color:#262626;transform:scaleX(0.9954)">Paint</div>
<div class="a lb" style="left:643.00px;top:89.39px;font-size:11px;line-height:13px;color:#262626;transform:scaleX(1.0385)">Дата и</div>
<div class="a lb" style="left:644.00px;top:102.19px;font-size:11px;line-height:13px;color:#262626;transform:scaleX(1.0366)">время</div>
<div class="a lb" style="left:684.50px;top:89.39px;font-size:11px;line-height:13px;color:#262626;transform:scaleX(1.0502)">Объект</div>
<div class="a lb" style="left:599.50px;top:122.59px;font-size:11px;line-height:13px;color:#595959;transform:scaleX(0.9337)">Вставка</div>
<div class="a lb" style="left:760.30px;top:55.49px;font-size:11px;line-height:13px;color:#262626;transform:scaleX(1.0597)">Поиск</div>
<div class="a lb" style="left:760.00px;top:77.59px;font-size:11px;line-height:13px;color:#262626;transform:scaleX(0.9717)">Замена</div>
<div class="a lb" style="left:760.30px;top:99.29px;font-size:11px;line-height:13px;color:#262626;transform:scaleX(0.9772)">Выделить все</div>
<div class="a lb" style="left:766.75px;top:122.59px;font-size:11px;line-height:13px;color:#595959;transform:scaleX(0.9924)">Правка</div>
<div class="a lb" style="left:9.50px;top:146.69px;font-size:11px;line-height:13px;color:#000;transform:scaleX(1.0819)">Программа WordPad поддерживает не все функции формата этого документа. Часть контента может быть потеряна или отображена неправильно.</div>
<div class="a lb" style="left:1743.50px;top:1021.69px;font-size:11px;line-height:13px;color:#000;transform:scaleX(0.9699)">100%</div>
<div class="a lb" style="left:1772.00px;top:1053.69px;font-size:11px;line-height:13px;color:#fff;transform:scaleX(0.9962)">РУС</div>
<div class="a lb" style="left:1823.00px;top:1044.69px;font-size:11px;line-height:13px;color:#fff;transform:scaleX(0.9863)">9:46</div>
<div class="a lb" style="left:1807.00px;top:1061.69px;font-size:11px;line-height:13px;color:#fff;transform:scaleX(0.9830)">22.12.2022</div>
<div class="a lb" style="left:1392.30px;top:947.37px;font-size:20px;line-height:22px;color:#b0b4bb;transform:scaleX(0.9945)">Активация Windows</div>
<div class="a lb" style="left:1391.22px;top:972.85px;font-size:14px;line-height:16px;color:#b0b4bb;transform:scaleX(1.0775)">Чтобы активировать Windows, перейдите в раздел "Параметры".</div>
<!--/LBL-->
</body></html>
